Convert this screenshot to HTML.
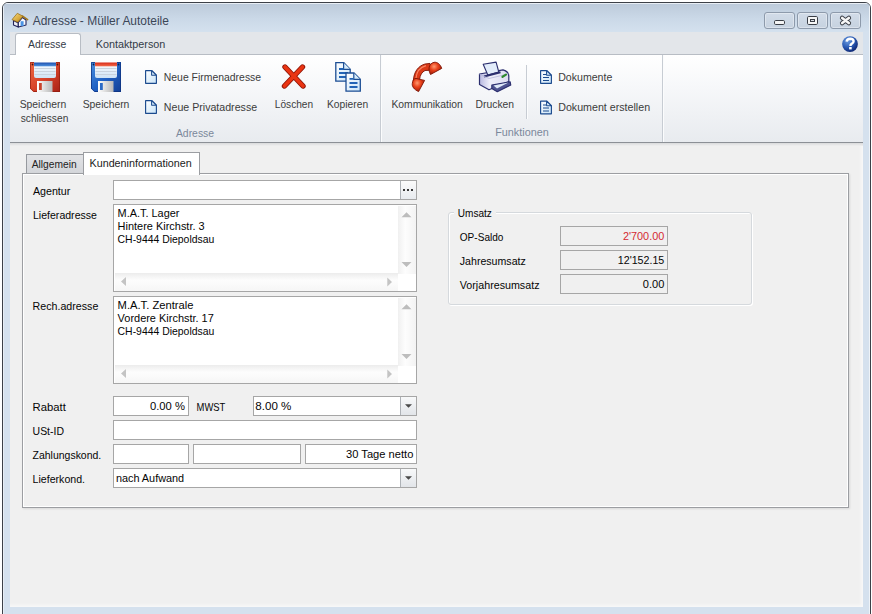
<!DOCTYPE html>
<html><head><meta charset="utf-8">
<style>
*{box-sizing:border-box;margin:0;padding:0}
html,body{width:872px;height:614px;overflow:hidden;background:#fff;font-family:"Liberation Sans",sans-serif;font-size:11px;color:#000}
.a{position:absolute}
svg{position:absolute;left:0;top:0;overflow:visible}
svg text{font-family:"Liberation Sans",sans-serif;white-space:pre}
.box{position:absolute;background:#fff;border:1px solid #a6a6a6}
.wb{position:absolute;top:12px;width:31px;height:17px;border:1px solid #8d9aab;border-radius:3px;background:linear-gradient(#d2dce8,#c6d2e0);box-shadow:inset 0 0 0 1px rgba(255,255,255,.35)}
.ddb{position:absolute;top:0;right:0;width:16px;height:18px;border-left:1px solid #aeb2b7;background:linear-gradient(#f8f9fa,#e2e5e9)}
.sep{position:absolute;width:2px;border-left:1px solid #c7ccd3;border-right:1px solid #fbfcfd}
</style></head><body>
<!-- window frame -->
<div class="a" style="left:2px;top:2px;width:869px;height:640px;border:1px solid #3d4148;border-radius:6px 6px 0 0;background:#d5e1ee;overflow:hidden">
  <div class="a" style="left:0;top:0;width:867px;height:29px;background:linear-gradient(#bdcbdb,#cbd9e8 55%,#d4e1ee);border-top:1px solid #e8eef5;border-left:1px solid #e8eef5"></div>
  <div class="a" style="left:0;top:29px;width:1px;height:620px;background:#e8eef5"></div>
  <div class="a" style="left:866px;top:0;width:1px;height:620px;background:#eef3f8"></div>
</div>
<!-- window buttons -->
<div class="wb" style="left:764px"></div>
<div class="wb" style="left:797px"></div>
<div class="wb" style="left:830px"></div>
<!-- tab strip -->
<div class="a" style="left:10px;top:32px;width:853px;height:22px;background:#e3e6ea"></div>
<!-- ribbon -->
<div class="a" style="left:10px;top:54px;width:853px;height:89px;background:linear-gradient(#ffffff 0%,#f7f8fa 35%,#e8ebef 100%);border-top:1px solid #b8bdc4;border-bottom:1px solid #8c9096"></div>
<div class="a" style="left:15px;top:33px;width:66px;height:22px;background:#fff;border:1px solid #b8bdc4;border-bottom:none;border-radius:3px 3px 0 0"></div>
<div class="sep" style="left:380px;top:55px;height:87px"></div>
<div class="sep" style="left:662px;top:55px;height:87px"></div>
<div class="sep" style="left:526px;top:65px;height:54px"></div>
<!-- body -->
<div class="a" style="left:10px;top:143px;width:853px;height:464px;background:#f0f0f0;box-shadow:inset -3px -3px 3px -1px rgba(255,255,255,.55)"></div>
<div class="a" style="left:10px;top:143px;width:853px;height:3px;background:linear-gradient(#d9dadc,#f0f0f0)"></div>
<!-- inner tabs -->
<div class="a" style="left:26px;top:154px;width:58px;height:20px;background:linear-gradient(#e2e3e6,#d3d5d9);border:1px solid #96999e;border-bottom:none"></div>
<div class="a" style="left:22px;top:173px;width:827px;height:335px;border:1px solid #9c9ea2;box-shadow:1px 1px 2px rgba(0,0,0,.10);background:#f0f0f0"></div>
<div class="a" style="left:23px;top:174px;width:825px;height:333px;border:1px solid #fff"></div>
<div class="a" style="left:83px;top:152px;width:117px;height:23px;background:#fff;border:1px solid #9c9ea2;border-bottom:none"></div>
<div class="a" style="left:84px;top:173px;width:115px;height:2px;background:#fff"></div>

<!-- Agentur -->
<div class="box" style="left:113px;top:180px;width:304px;height:20px"><div class="ddb" style="background:linear-gradient(#fbfbfb,#e8ebef);height:18px;width:16px"></div></div>
<!-- memo 1 -->
<div class="box" style="left:113px;top:204px;width:304px;height:88px">
  <div class="a" style="left:284px;top:1px;width:18px;height:68px;background:linear-gradient(to right,#f0f0f0,#fdfdfd 40%,#f3f3f3)"></div>
  <div class="a" style="left:1px;top:68px;width:283px;height:18px;background:linear-gradient(#ececec,#fdfdfd 40%,#f6f6f6)"></div>
</div>
<!-- memo 2 -->
<div class="box" style="left:113px;top:296px;width:304px;height:88px">
  <div class="a" style="left:284px;top:1px;width:18px;height:68px;background:linear-gradient(to right,#f0f0f0,#fdfdfd 40%,#f3f3f3)"></div>
  <div class="a" style="left:1px;top:68px;width:283px;height:18px;background:linear-gradient(#ececec,#fdfdfd 40%,#f6f6f6)"></div>
</div>
<!-- Rabatt / MWST -->
<div class="box" style="left:113px;top:396px;width:76px;height:20px"></div>
<div class="box" style="left:253px;top:396px;width:164px;height:20px"><div class="ddb"></div></div>
<div class="box" style="left:113px;top:420px;width:304px;height:20px"></div>
<div class="box" style="left:113px;top:444px;width:76px;height:20px"></div>
<div class="box" style="left:193px;top:444px;width:108px;height:20px"></div>
<div class="box" style="left:305px;top:444px;width:112px;height:20px"></div>
<div class="box" style="left:113px;top:468px;width:304px;height:20px"><div class="ddb"></div></div>

<!-- Umsatz group -->
<div class="a" style="left:448px;top:212px;width:304px;height:93px;border:1px solid #d5d9dd;border-radius:3px;box-shadow:inset 1px 1px 0 #fff,1px 1px 0 #fff"></div>
<div class="a" style="left:454px;top:208px;width:42px;height:10px;background:#f0f0f0"></div>
<div class="box" style="left:560px;top:226px;width:108px;height:20px;background:#f0f0f0"></div>
<div class="box" style="left:560px;top:250px;width:108px;height:20px;background:#f0f0f0"></div>
<div class="box" style="left:560px;top:274px;width:108px;height:20px;background:#f0f0f0"></div>

<svg width="872" height="614" viewBox="0 0 872 614">
<defs>
 <linearGradient id="gred" x1="0" y1="0" x2="1" y2="1"><stop offset="0" stop-color="#ee6a44"/><stop offset=".5" stop-color="#d8432a"/><stop offset="1" stop-color="#a82216"/></linearGradient>
 <linearGradient id="gblue" x1="0" y1="0" x2="1" y2="1"><stop offset="0" stop-color="#4b8fe0"/><stop offset=".5" stop-color="#2162c4"/><stop offset="1" stop-color="#123f96"/></linearGradient>
 <linearGradient id="glabel" x1="0" y1="0" x2="0" y2="1"><stop offset="0" stop-color="#ffffff"/><stop offset="1" stop-color="#cfe3f5"/></linearGradient>
 <linearGradient id="gshut" x1="0" y1="0" x2="1" y2="0"><stop offset="0" stop-color="#ffffff"/><stop offset="1" stop-color="#b8b8b8"/></linearGradient>
 <linearGradient id="gdoc" x1="0" y1="0" x2="1" y2="1"><stop offset="0" stop-color="#ffffff"/><stop offset="1" stop-color="#c9e4f8"/></linearGradient>
 <radialGradient id="ghelp" cx=".35" cy=".3" r=".75"><stop offset="0" stop-color="#6a9be0"/><stop offset=".55" stop-color="#2a5bb5"/><stop offset="1" stop-color="#0c2470"/></radialGradient>
 <radialGradient id="gphone" cx=".4" cy=".35" r=".7"><stop offset="0" stop-color="#ff9a70"/><stop offset=".45" stop-color="#e8401a"/><stop offset="1" stop-color="#9a1a08"/></radialGradient>
 <linearGradient id="groof" x1="0" y1="0" x2="1" y2="1"><stop offset="0" stop-color="#f6dc86"/><stop offset=".6" stop-color="#d8a93c"/><stop offset="1" stop-color="#a9781a"/></linearGradient>
<linearGradient id="gprn" x1="0" y1="0" x2="1" y2="0"><stop offset="0" stop-color="#b8b8e0"/><stop offset=".35" stop-color="#eeeefa"/><stop offset="1" stop-color="#dcdcf0"/></linearGradient>
<linearGradient id="gstripb" x1="0" y1="0" x2="0" y2="1"><stop offset="0" stop-color="#1c4fae"/><stop offset="1" stop-color="#4f92de"/></linearGradient>
<linearGradient id="gstripr" x1="0" y1="0" x2="0" y2="1"><stop offset="0" stop-color="#d82a18"/><stop offset="1" stop-color="#f36c4c"/></linearGradient>
</defs>
<!-- house icon -->
<g>
 <path d="M13.5 20.5 L18.3 23 L18.3 27 L13.5 25 Z" fill="#eef0f8" stroke="#23245a" stroke-width="1.1" stroke-linejoin="round"/>
 <path d="M18.3 22.5 L22.5 17.5 L26 20 L26 25 L18.3 27 Z" fill="#f7f8fc" stroke="#23245a" stroke-width="1.1" stroke-linejoin="round"/>
 <rect x="20.6" y="21.2" width="3" height="4.8" fill="#4a93e4"/>
 <path d="M12 19.6 L17.3 13.3 L23 16.2 L17.8 22.2 Z" fill="url(#groof)" stroke="#8e6612" stroke-width=".7" stroke-linejoin="round"/>
 <path d="M22.6 16.2 L27.6 19.6" stroke="#a67a1c" stroke-width="1.6" stroke-linecap="round"/>
</g>
<!-- window glyphs -->
<rect x="774.5" y="20.5" width="10" height="4" rx="1.2" fill="#f4f4f4" stroke="#3a3e46" stroke-width="1"/>
<rect x="807.5" y="16.5" width="10" height="8" rx="1.2" fill="#f6f6f6" stroke="#3a3e46" stroke-width="1"/>
<rect x="810.5" y="19.5" width="4" height="2" fill="#d8dce2" stroke="#3a3e46" stroke-width="1"/>
<path d="M842.2 18 L848.8 23 M848.8 18 L842.2 23" stroke="#3a3e46" stroke-width="4.6" stroke-linecap="round"/>
<path d="M842.2 18 L848.8 23 M848.8 18 L842.2 23" stroke="#f7f7f7" stroke-width="2.7" stroke-linecap="round"/>
<!-- help -->
<circle cx="850" cy="44.1" r="7.9" fill="url(#ghelp)"/>
<path d="M846.6 41.6 Q847 38.8 850.2 38.8 Q853.6 38.9 853.6 41.3 Q853.6 42.9 851.6 43.9 Q850.4 44.6 850.4 46" fill="none" stroke="#fff" stroke-width="2.4"/>
<rect x="849.1" y="47" width="2.6" height="2.4" fill="#fff"/>

<!-- red floppy -->
<g transform="translate(30,62)">
 <path d="M0 0 H30 V30 H3.5 L0 26.5 Z" fill="url(#gred)"/>
 <path d="M0.5 0.5 H29.5 V29.5 H3.7 L0.5 26.3 Z" fill="none" stroke="#8e1c10" stroke-width="1" opacity=".7"/>
 <path d="M4 0 H26 V14 Q26 16 24 16 H6 Q4 16 4 14 Z" fill="url(#glabel)"/>
 <rect x="4" y="0.5" width="22" height="3.8" fill="url(#gstripb)"/>
 <path d="M4.5 6.5 H25.5 M4.5 9.5 H25.5 M4.5 12.5 H25.5" stroke="#c9d3de" stroke-width="1"/>
 <circle cx="2.5" cy="2.5" r=".9" fill="#4a1410"/><circle cx="27.5" cy="2.5" r=".9" fill="#4a1410"/>
 <rect x="7" y="19" width="15.5" height="11" fill="url(#gshut)"/>
 <rect x="9" y="21" width="2.8" height="7" fill="#c8442c"/>
</g>
<!-- blue floppy -->
<g transform="translate(91,62)">
 <path d="M0 0 H30 V30 H3.5 L0 26.5 Z" fill="url(#gblue)"/>
 <path d="M0.5 0.5 H29.5 V29.5 H3.7 L0.5 26.3 Z" fill="none" stroke="#0d2f7a" stroke-width="1" opacity=".7"/>
 <path d="M4 0 H26 V14 Q26 16 24 16 H6 Q4 16 4 14 Z" fill="url(#glabel)"/>
 <rect x="4" y="0.5" width="22" height="3.8" fill="url(#gstripr)"/>
 <path d="M4.5 6.5 H25.5 M4.5 9.5 H25.5 M4.5 12.5 H25.5" stroke="#c9d3de" stroke-width="1"/>
 <circle cx="2.5" cy="2.5" r=".9" fill="#0a1e4a"/><circle cx="27.5" cy="2.5" r=".9" fill="#0a1e4a"/>
 <rect x="7" y="19" width="15.5" height="11" fill="url(#gshut)"/>
 <rect x="9" y="21" width="2.8" height="7" fill="#2b6ac6"/>
</g>
<!-- doc icons -->
<g id="doc1" transform="translate(145,70)">
 <path d="M0.6 0.6 H6.9 L11.4 5.1 V13.4 H0.6 Z" fill="url(#gdoc)" stroke="#1b4a8e" stroke-width="1.15" stroke-linejoin="bevel"/>
 <path d="M6.6 0.6 V5.3 H11.4 Z" fill="#d8eefc" stroke="#1b4a8e" stroke-width="1.05" stroke-linejoin="bevel"/>
</g>
<g transform="translate(145,100)">
 <path d="M0.6 0.6 H6.9 L11.4 5.1 V13.4 H0.6 Z" fill="url(#gdoc)" stroke="#1b4a8e" stroke-width="1.15" stroke-linejoin="bevel"/>
 <path d="M6.6 0.6 V5.3 H11.4 Z" fill="#d8eefc" stroke="#1b4a8e" stroke-width="1.05" stroke-linejoin="bevel"/>
</g>
<g transform="translate(540,70)">
 <path d="M0.6 0.6 H6.9 L11.4 5.1 V13.4 H0.6 Z" fill="url(#gdoc)" stroke="#1b4a8e" stroke-width="1.15" stroke-linejoin="bevel"/>
 <path d="M6.6 0.6 V5.3 H11.4 Z" fill="#d8eefc" stroke="#1b4a8e" stroke-width="1.05" stroke-linejoin="bevel"/>
 <path d="M3 4.5 H6 M3 7.5 H9 M3 10.5 H9" stroke="#1b4a8e" stroke-width="1"/>
</g>
<g transform="translate(540,100.5)">
 <path d="M0.6 0.6 H6.9 L11.4 5.1 V13.4 H0.6 Z" fill="url(#gdoc)" stroke="#1b4a8e" stroke-width="1.15" stroke-linejoin="bevel"/>
 <path d="M6.6 0.6 V5.3 H11.4 Z" fill="#d8eefc" stroke="#1b4a8e" stroke-width="1.05" stroke-linejoin="bevel"/>
 <path d="M3 4.5 H6 M3 7.5 H9 M3 10.5 H9" stroke="#1b4a8e" stroke-width="1"/>
</g>
<!-- X icon -->
<path d="M285 67 L303 86 M302.5 67 L284.5 86" stroke="#8f1608" stroke-width="5.4" stroke-linecap="round"/>
<path d="M285 67 L303 86 M302.5 67 L284.5 86" stroke="#ea3412" stroke-width="3.6" stroke-linecap="round"/>
<!-- copy icon -->
<g>
 <path d="M335.8 62.7 H343.8 L350.2 69.2 V81.2 H335.8 Z" fill="url(#gdoc)" stroke="#1d4e94" stroke-width="1.3"/>
 <path d="M343.6 62.7 V69.3 H350.2" fill="#d6ecfb" stroke="#1d4e94" stroke-width="1.2"/>
 <path d="M339 69 H343.5 M339 73 H348 M339 77 H348" stroke="#2264b6" stroke-width="1.8"/>
 <path d="M346 73 H354 L360.3 79.3 V91.2 H346 Z" fill="url(#gdoc)" stroke="#1d4e94" stroke-width="1.3"/>
 <path d="M353.8 73 V79.4 H360.3" fill="#d6ecfb" stroke="#1d4e94" stroke-width="1.2"/>
 <path d="M349.5 78.8 H353.5 M349.5 83 H357.5 M349.5 87 H357.5" stroke="#2264b6" stroke-width="1.8"/>
</g>
<!-- phone -->
<g stroke="#7e1404" stroke-width=".9" stroke-linejoin="round">
 <path d="M413.3 81 C413.8 72 418 66 425 64 L430 63.4 L431 70.2 L425 70.5 C422 72 420 75 419.6 79.5 Z" fill="#dc3a18"/>
 <path d="M416 78 C416.5 72 419.5 67.5 426 65.6" fill="none" stroke="#ff9270" stroke-width="1.1" opacity=".85"/>
 <path d="M430.5 74.5 C428 70 428.3 63.8 434 62.3 C437.5 61.8 440.5 64.5 441.7 68.4 Z" fill="url(#gphone)"/>
 <path d="M418.6 91.6 C414 89.5 411.8 86.5 412.3 83.5 C412.6 80 414 78.6 416 78.4 L424.6 80.4 Z" fill="url(#gphone)"/>
</g>
<!-- printer -->
<g stroke="#2b2e6e" stroke-linejoin="round">
 <path d="M479.5 74 L503 69.8 Q508.8 71.5 508.8 76 L508.8 81.5 L489 89.8 L479.5 84.5 Z" fill="url(#gprn)" stroke-width="1.2"/>
 <path d="M483.2 64.2 L496.1 62.1 L498.8 72 L487.8 75 Z" fill="#e2ecfa" stroke-width="1.1"/>
 <path d="M484 76.5 L500.5 72.3" fill="none" stroke="#2b2e6e" stroke-width="2"/>
 <path d="M479.5 74.2 L489 78.5 L508.6 73.8" fill="none" stroke="#b4b6d8" stroke-width=".8"/>
 <path d="M491.8 85 L510.2 81.8 L510.8 85 L497.3 91.7 L491.8 88.5 Z" fill="#4e5290" stroke-width="1.1"/>
 <path d="M493.5 85.5 L508.5 82.6 L497 88.6 Z" fill="#dfe9f7" stroke="none"/>
 <path d="M502.5 76.8 L506 74.6" stroke="#2f8a2f" stroke-width="2.2" stroke-linecap="round"/>
</g>
<text x="32.70" y="25.00" font-size="12.5" fill="#3b4657" textLength="136.25" lengthAdjust="spacingAndGlyphs">Adresse - Müller Autoteile</text>
<text x="28.00" y="48.00" font-size="11" fill="#333b47" textLength="38.21" lengthAdjust="spacingAndGlyphs">Adresse</text>
<text x="95.70" y="48.00" font-size="11" fill="#333b47" textLength="69.62" lengthAdjust="spacingAndGlyphs">Kontaktperson</text>
<text x="19.70" y="108.00" font-size="11" fill="#3c3c3c" textLength="46.61" lengthAdjust="spacingAndGlyphs">Speichern</text>
<text x="20.70" y="122.00" font-size="11" fill="#3c3c3c" textLength="47.61" lengthAdjust="spacingAndGlyphs">schliessen</text>
<text x="82.70" y="108.00" font-size="11" fill="#3c3c3c" textLength="46.71" lengthAdjust="spacingAndGlyphs">Speichern</text>
<text x="163.80" y="81.00" font-size="11" fill="#3c3c3c" textLength="97.31" lengthAdjust="spacingAndGlyphs">Neue Firmenadresse</text>
<text x="163.80" y="111.00" font-size="11" fill="#3c3c3c" textLength="93.31" lengthAdjust="spacingAndGlyphs">Neue Privatadresse</text>
<text x="175.90" y="137.00" font-size="11" fill="#7b889b" textLength="38.21" lengthAdjust="spacingAndGlyphs">Adresse</text>
<text x="274.80" y="107.50" font-size="11" fill="#3c3c3c" textLength="38.31" lengthAdjust="spacingAndGlyphs">Löschen</text>
<text x="327.00" y="107.50" font-size="11" fill="#3c3c3c" textLength="41.11" lengthAdjust="spacingAndGlyphs">Kopieren</text>
<text x="391.40" y="107.60" font-size="11" fill="#3c3c3c" textLength="71.31" lengthAdjust="spacingAndGlyphs">Kommunikation</text>
<text x="475.60" y="107.60" font-size="11" fill="#3c3c3c" textLength="38.51" lengthAdjust="spacingAndGlyphs">Drucken</text>
<text x="558.20" y="81.00" font-size="11" fill="#3c3c3c" textLength="54.11" lengthAdjust="spacingAndGlyphs">Dokumente</text>
<text x="558.20" y="111.00" font-size="11" fill="#3c3c3c" textLength="91.91" lengthAdjust="spacingAndGlyphs">Dokument erstellen</text>
<text x="495.20" y="136.00" font-size="11" fill="#7b889b" textLength="53.52" lengthAdjust="spacingAndGlyphs">Funktionen</text>
<text x="31.70" y="168.00" font-size="11" fill="#222" textLength="44.91" lengthAdjust="spacingAndGlyphs">Allgemein</text>
<text x="89.50" y="167.00" font-size="11" fill="#222" textLength="102.22" lengthAdjust="spacingAndGlyphs">Kundeninformationen</text>
<text x="32.90" y="195.00" font-size="11" fill="#050505" textLength="37.47" lengthAdjust="spacingAndGlyphs">Agentur</text>
<text x="33.00" y="218.50" font-size="11" fill="#050505" textLength="63.91" lengthAdjust="spacingAndGlyphs">Lieferadresse</text>
<text x="117.60" y="216.50" font-size="11" fill="#050505" textLength="61.87" lengthAdjust="spacingAndGlyphs">M.A.T. Lager</text>
<text x="117.60" y="229.80" font-size="11" fill="#050505" textLength="87.02" lengthAdjust="spacingAndGlyphs">Hintere Kirchstr. 3</text>
<text x="117.60" y="242.50" font-size="11" fill="#050505" textLength="96.71" lengthAdjust="spacingAndGlyphs">CH-9444 Diepoldsau</text>
<text x="32.60" y="310.20" font-size="11" fill="#050505" textLength="65.71" lengthAdjust="spacingAndGlyphs">Rech.adresse</text>
<text x="117.60" y="308.90" font-size="11" fill="#050505" textLength="75.82" lengthAdjust="spacingAndGlyphs">M.A.T. Zentrale</text>
<text x="117.60" y="322.00" font-size="11" fill="#050505" textLength="96.22" lengthAdjust="spacingAndGlyphs">Vordere Kirchstr. 17</text>
<text x="117.60" y="334.70" font-size="11" fill="#050505" textLength="96.71" lengthAdjust="spacingAndGlyphs">CH-9444 Diepoldsau</text>
<text x="32.60" y="411.00" font-size="11" fill="#050505" textLength="33.26" lengthAdjust="spacingAndGlyphs">Rabatt</text>
<text x="150.00" y="410.00" font-size="11" fill="#050505" textLength="34.98" lengthAdjust="spacingAndGlyphs">0.00 %</text>
<text x="196.60" y="411.00" font-size="11" fill="#050505" textLength="28.76" lengthAdjust="spacingAndGlyphs">MWST</text>
<text x="255.30" y="410.00" font-size="11" fill="#050505" textLength="36.07" lengthAdjust="spacingAndGlyphs">8.00 %</text>
<text x="32.60" y="435.00" font-size="11" fill="#050505" textLength="31.35" lengthAdjust="spacingAndGlyphs">USt-ID</text>
<text x="32.60" y="459.00" font-size="11" fill="#050505" textLength="68.65" lengthAdjust="spacingAndGlyphs">Zahlungskond.</text>
<text x="346.10" y="458.30" font-size="11" fill="#050505" textLength="67.22" lengthAdjust="spacingAndGlyphs">30 Tage netto</text>
<text x="32.60" y="482.80" font-size="11" fill="#050505" textLength="52.45" lengthAdjust="spacingAndGlyphs">Lieferkond.</text>
<text x="115.90" y="481.50" font-size="11" fill="#050505" textLength="68.22" lengthAdjust="spacingAndGlyphs">nach Aufwand</text>
<text x="457.80" y="217.00" font-size="11" fill="#050505" textLength="34.06" lengthAdjust="spacingAndGlyphs">Umsatz</text>
<text x="459.80" y="240.80" font-size="11" fill="#050505" textLength="43.61" lengthAdjust="spacingAndGlyphs">OP-Saldo</text>
<text x="459.80" y="264.70" font-size="11" fill="#050505" textLength="65.98" lengthAdjust="spacingAndGlyphs">Jahresumsatz</text>
<text x="459.80" y="289.00" font-size="11" fill="#050505" textLength="79.69" lengthAdjust="spacingAndGlyphs">Vorjahresumsatz</text>
<text x="622.90" y="240.20" font-size="11" fill="#d42a32" textLength="41.42" lengthAdjust="spacingAndGlyphs">2'700.00</text>
<text x="617.80" y="264.00" font-size="11" fill="#050505" textLength="46.51" lengthAdjust="spacingAndGlyphs">12'152.15</text>
<text x="642.80" y="288.00" font-size="11" fill="#050505" textLength="21.52" lengthAdjust="spacingAndGlyphs">0.00</text>
<!-- scroll arrows -->
<path d="M401.5 217.3 L406.5 212.3 L411.5 217.3 Z M401.5 262 L406.5 267 L411.5 262 Z" fill="#bdbdbd"/>
<path d="M387.3 277.6 L392 282 L387.3 286.4 Z M126 277 L121 281.5 L126 286 Z" fill="#c4c4c4"/>
<path d="M401.5 309.3 L406.5 304.3 L411.5 309.3 Z M401.5 354 L406.5 359 L411.5 354 Z" fill="#bdbdbd"/>
<path d="M387.3 369.6 L392 374 L387.3 378.4 Z M126 369 L121 373.5 L126 378 Z" fill="#c4c4c4"/>
<!-- combo arrows -->
<path d="M405 404.2 L412 404.2 L408.5 407.7 Z M405 476.2 L412 476.2 L408.5 479.7 Z" fill="#4a4a4a"/>
<!-- dots -->
<path d="M403 189 h2 v2 h-2 Z M407 189 h2 v2 h-2 Z M411 189 h2 v2 h-2 Z" fill="#383838"/>
</svg>
</body></html>
